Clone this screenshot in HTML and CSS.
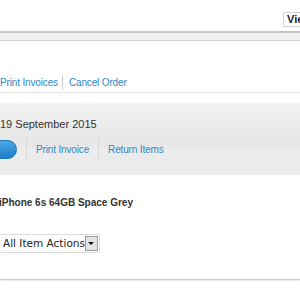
FILE: index.html
```html
<!DOCTYPE html>
<html>
<head>
<meta charset="utf-8">
<link rel="stylesheet" href="styles.css">
</head>
<body>
<div class="page">
  <div class="topbar">
    <div class="view-select">View</div>
  </div>
  <div class="band"></div>
  <div class="order-links">
    <a class="link">Print Invoices</a>
    <span class="sep"></span>
    <a class="link">Cancel Order</a>
  </div>
  <div class="rule"></div>
  <div class="panel">
    <div class="date">19 September 2015</div>
    <div class="actions">
      <span class="pill"></span>
      <span class="vsep"></span>
      <a class="link">Print Invoice</a>
      <span class="vsep"></span>
      <a class="link">Return Items</a>
    </div>
  </div>
  <div class="item">
    <div class="item-name">iPhone 6s 64GB Space Grey</div>
    <div class="select">
      <span class="select-text">All Item Actions</span>
      <span class="select-btn"><span class="arrow"></span></span>
    </div>
  </div>
  <div class="bottom-rule"></div>
</div>
</body>
</html>
```
FILE: styles.css
```css
html, body {
  margin: 0;
  padding: 0;
  background: #fff;
  overflow: hidden;
}
.page {
  width: 300px;
  height: 300px;
  overflow: hidden;
  font-family: "Liberation Sans", Arial, sans-serif;
  color: #333;
}
.topbar {
  height: 31px;
  display: flex;
  justify-content: flex-end;
  align-items: flex-start;
}
.view-select {
  margin-top: 12px;
  margin-right: -22px;
  height: 13px;
  width: 34px;
  border: 1px solid #d4d4d4;
  padding-left: 3px;
  font-size: 11px;
  line-height: 13px;
  font-weight: bold;
  color: #222;
}
.band {
  height: 7px;
  border-top: 2px solid #c6c6c6;
  border-bottom: 1px solid #d3d3d3;
  background: #f1f1f3;
}
.order-links {
  display: flex;
  align-items: center;
  height: 18px;
  margin-top: 32px;
}
.link {
  color: #2f87c6;
  font-size: 10px;
  letter-spacing: -0.15px;
  white-space: nowrap;
}
.order-links .sep {
  width: 1px;
  height: 15px;
  background: #cfcfcf;
  margin: 0 6px 0 4px;
}
.rule {
  height: 1px;
  background: #e2e2e2;
  margin-top: 1px;
}
.panel {
  margin-top: 10px;
  height: 72px;
  border-top: 1px solid #f6f6f6;
  background: linear-gradient(#f2f2f2 0%, #e6e6e6 58%, #ebebeb 59%, #ececec 100%);
  box-sizing: border-box;
  padding-top: 13px;
}
.date {
  font-size: 11px;
  line-height: 14px;
  color: #333;
  white-space: nowrap;
}
.actions {
  display: flex;
  align-items: center;
  margin-top: 6px;
  height: 24px;
}
.pill {
  width: 40px;
  height: 19px;
  margin-left: -23px;
  border-radius: 10px;
  background: linear-gradient(#4ca7e4, #1d7dc7);
  border: 1px solid #1a6fb2;
  box-sizing: border-box;
}
.vsep {
  width: 1px;
  height: 24px;
  background: #d9d9d9;
  margin: 0 9px 0 9px;
}
.item {
  padding-top: 22px;
}
.item-name {
  font-size: 10px;
  font-weight: bold;
  line-height: 12px;
  margin-left: -1px;
  color: #333;
  white-space: nowrap;
}
.select {
  display: flex;
  margin-top: 25px;
  width: 100px;
  height: 19px;
  border: 1px solid #dcdcdc;
  border-left: none;
  box-sizing: border-box;
  background: #fff;
}
.select-text {
  flex: 1;
  padding-left: 3px;
  font-family: "DejaVu Sans", Verdana, sans-serif;
  font-size: 10.5px;
  line-height: 17px;
  color: #222;
  white-space: nowrap;
}
.select-btn {
  width: 14px;
  height: 15px;
  margin: 1px 1px 0 0;
  background: #e4e4e4;
  border: 1px solid #9a9a9a;
  box-sizing: border-box;
  display: flex;
  align-items: center;
  justify-content: center;
}
.arrow {
  width: 0;
  height: 0;
  border-left: 3px solid transparent;
  border-right: 3px solid transparent;
  border-top: 3px solid #111;
}
.bottom-rule {
  margin-top: 26px;
  height: 1px;
  background: #c8c8c8;
  box-shadow: 0 1px 1px #e6e6e6;
}
```
